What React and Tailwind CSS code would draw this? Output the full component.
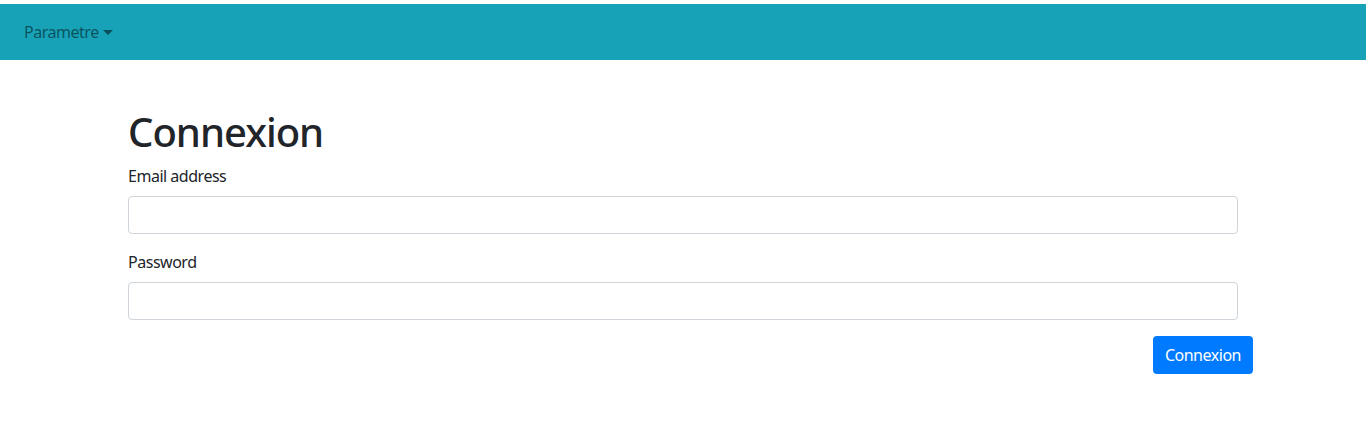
import React from 'react';

const font = { fontFamily: '"Noto Sans", "Open Sans", "Liberation Sans", sans-serif' };

function Field({ label, type }) {
  return (
    <div className="mb-4">
      <label className="block mb-2 text-base leading-6 text-[#212529]">{label}</label>
      <input
        type={type}
        className="block w-full h-[38px] px-3 py-1.5 text-base bg-white border border-[#ced4da] rounded-[4px] outline-none"
      />
    </div>
  );
}

export default function App() {
  return (
    <div className="min-h-screen bg-white pt-1 tracking-[-0.03em]" style={font}>
      <nav className="bg-[#17a2b8] h-14 px-4 py-2 flex items-center">
        <button className="px-2 py-2 text-base leading-6 text-black/50 flex items-center tracking-[-0.03em]">
          Parametre
          <span className="ml-[4px] inline-block w-0 h-0 border-x-[5px] border-x-transparent border-t-[5px] border-t-black/50" />
        </button>
      </nav>

      <div className="max-w-[1140px] mx-auto px-[15px] mt-12">
        <h1 className="text-[40px] leading-[48px] font-medium text-[#212529] mb-2 tracking-[-0.025em]">Connexion</h1>
        <form>
          <Field label="Email address" type="email" />
          <Field label="Password" type="password" />
          <div className="flex justify-end -mr-[15px]">
            <button
              type="button"
              className="h-[38px] px-3 bg-[#007bff] text-white text-base rounded-[4px] tracking-[-0.03em]"
            >
              Connexion
            </button>
          </div>
        </form>
      </div>
    </div>
  );
}
